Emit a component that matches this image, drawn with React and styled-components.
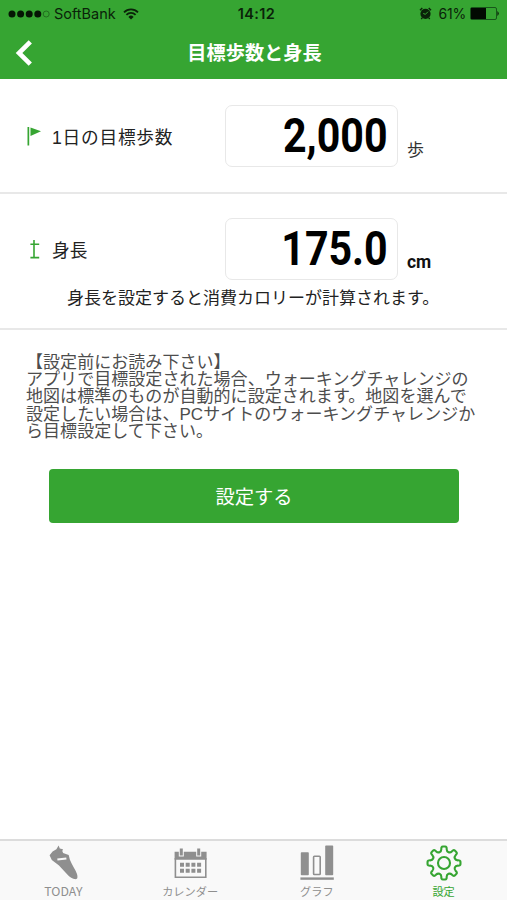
import styled, { createGlobalStyle } from 'styled-components';

const GREEN = '#36a532';
const GRAY = '#8f8f8f';

const GlobalStyle = createGlobalStyle`
  * {
    box-sizing: border-box;
  }
  body {
    margin: 0;
    background: #fff;
    font-family: "Liberation Sans", "Noto Sans CJK JP", sans-serif;
  }
`

const Screen = styled.div`
  display: flex;
  flex-direction: column;
  width: 507px;
  height: 900px;
  overflow: hidden;
  color: #222;
`

const Header = styled.header`
  height: 79px;
  background: ${GREEN};
`

const StatusBar = styled.div`
  display: grid;
  grid-template-columns: 1fr auto 1fr;
  align-items: center;
  height: 27px;
  padding: 0 7px 0 8px;
  font: 400 14.5px/20px Inter, sans-serif;
  color: #0a2209;
`

const StatusGroup = styled.div`
  display: flex;
  align-items: center;
  justify-content: ${({ $end }) => ($end ? 'flex-end' : 'flex-start')};
`

const Carrier = styled.span`
  margin: 0 7px 0 4px;
`

const Clock = styled.span`
  padding-left: 5px;
  font-size: 14.5px;
  font-weight: 600;
  letter-spacing: 0.4px;
`

const Battery = styled.span`
  margin: 0 4px 0 6px;
  font-size: 14px;
  letter-spacing: -0.2px;
`

const NavBar = styled.div`
  display: grid;
  grid-template-columns: 60px 1fr 60px;
  align-items: center;
  height: 52px;
`

const BackButton = styled.button`
  display: flex;
  padding: 0 0 0 15px;
  border: 0;
  background: none;
`

const Title = styled.h1`
  margin: 1px 0 0 2px;
  color: #fff;
  font-size: 19.2px;
  font-weight: 700;
  line-height: 28px;
  text-align: center;
`

const Section = styled.section`
  height: ${({ $height }) => $height}px;
  padding: ${({ $top }) => $top}px 0 0 26px;
  border-bottom: 2px solid #e8e8e8;
`

const Field = styled.div`
  display: grid;
  grid-template-columns: 26px 173px 173px auto;
  align-items: center;
  height: 62px;
`

const Label = styled.label`
  padding-top: 3px;
  font-size: 17.7px;
  line-height: 26px;
  letter-spacing: ${({ $spacing }) => $spacing || 0}px;
`

const ValueBox = styled.div`
  display: flex;
  align-items: center;
  justify-content: flex-end;
  height: 62px;
  padding-right: 9px;
  border: 1px solid #e8e8e8;
  border-radius: 7px;
`

/* narrow, heavy digits */
const Value = styled.span`
  color: #000;
  font: 700 49px/60px Roboto, sans-serif;
  transform: scaleX(0.84);
  transform-origin: right center;
`

const Unit = styled.span`
  align-self: end;
  margin: 0 0 5px 9px;
  font: ${({ $bold }) => ($bold
    ? '700 17.5px/26px Roboto, sans-serif'
    : '400 17px/26px "Noto Sans CJK JP", sans-serif')};
  color: ${({ $bold }) => ($bold ? '#111' : '#333')};
`

const Help = styled.p`
  margin: 6px 0 0 41px;
  font-size: 17px;
  line-height: 26px;
  white-space: nowrap;
`

const Notice = styled.p`
  margin: 24px 0 0 26px;
  color: #4d4d4d;
  font-size: 17px;
  line-height: 17.2px;
  letter-spacing: 0.05px;
  white-space: nowrap;
`

const SubmitButton = styled.button`
  width: 410px;
  height: 54px;
  margin: 29px 0 0 49px;
  border: 0;
  border-radius: 4px;
  background: ${GREEN};
  color: #fff;
  font: 400 19.3px/52px "Noto Sans CJK JP", sans-serif;
`

const TabBar = styled.nav`
  display: grid;
  grid-template-columns: repeat(4, 1fr);
  height: 61px;
  margin-top: auto;
  border-top: 2px solid #dcdcdc;
  background: #f9f9f9;
  font-family: "Noto Sans CJK JP", sans-serif;
`

const Tab = styled.div`
  display: flex;
  flex-direction: column;
  align-items: center;
  padding-top: 4px;
  color: ${({ $active }) => ($active ? GREEN : GRAY)};
  font-size: ${({ $size }) => $size || 11.2}px;
  line-height: 16px;

  svg {
    margin-bottom: 2px;
  }
`

const SignalDots = () => (
  <svg width="42" height="10" viewBox="0 0 42 10">
    {[4, 12.6, 21.2, 29.8].map((x) => (
      <circle key={x} cx={x} cy="5" r="3.5" fill="#051604" />
    ))}
    <circle cx="38.2" cy="5" r="3" fill="none" stroke="#1d611b" strokeWidth="0.8" />
  </svg>
)

const WifiIcon = () => (
  <svg width="16" height="12" viewBox="0 0 16 12" fill="none" stroke="#0a2209" strokeWidth="1.8">
    <path d="M1 4.3a10 10 0 0 1 14 0M3.4 6.8a6.5 6.5 0 0 1 9.2 0" />
    <path d="M8 11.5 5.4 8.9a3.7 3.7 0 0 1 5.2 0z" fill="#0a2209" stroke="none" />
  </svg>
)

const AlarmIcon = () => (
  <svg width="13" height="13" viewBox="0 0 13 13">
    <circle cx="6.5" cy="6.8" r="5.1" fill="#0a2209" />
    <path d="M1 3.2 3.3 1M12 3.2 9.7 1M3.2 10.8l-.9 1.2M9.8 10.8l.9 1.2" stroke="#0a2209" strokeWidth="1.4" />
    <path d="M6.3 7.4 9 4.7M6.5 7.3 4.2 6.5" stroke={GREEN} strokeWidth="1" />
  </svg>
)

const BatteryIcon = () => (
  <svg width="30" height="13" viewBox="0 0 30 13">
    <rect x="0.5" y="0.5" width="26" height="12" rx="1.5" fill="none" stroke="#17561a" />
    <path d="M1 1h15v11H1z" fill="#020a02" />
    <path d="M27.4 4q2.8 2.5 0 5z" fill="#0a2209" />
  </svg>
)

const BackIcon = () => (
  <svg width="18" height="26" viewBox="0 0 18 26" fill="none" stroke="#fff" strokeWidth="4.6">
    <path d="M15.3 1.8 4 13l11.3 11.2" />
  </svg>
)

const FlagIcon = () => (
  <svg width="16" height="20" viewBox="0 0 16 20" fill={GREEN}>
    <path d="M1.5 1h1.7v18.5H1.5zM4.5 1.5 15 5.3 4.5 10z" />
  </svg>
)

const HeightIcon = () => (
  <svg width="16" height="20" viewBox="0 0 16 20" fill="none" stroke={GREEN} strokeWidth="1.6">
    <path d="M8 1v18M4.4 5.2h8.8M4.4 18.6h8.8" />
  </svg>
)

const ShoeIcon = () => (
  <svg width="34" height="36" viewBox="0 0 34 36">
    <path
      d="M12.6 .6 13.8 3.4l3.2.8-.7 1.9.8 2 5.6 2 1.2 4.6c2 5.2 5.6 9.9 7 14 .8 2.3.9 5-.6 5.4-3 .4-6.6-1.9-9.2-4.9L13 20.5 5.8 15 3.6 10.2 6.6 6.4l3.8-2.1z"
      fill={GRAY}
    />
    <path d="m11.4 14.6 9-1.1" stroke="#f9f9f9" strokeWidth="2" />
  </svg>
)

const CalendarIcon = () => (
  <svg width="34" height="36" viewBox="0 0 34 36" fill={GRAY}>
    <path d="M1.6 6.8h4.2v4.8h5V6.8h12.4v4.8h5V6.8h5.4v8H1.6z" />
    <path d="M6.8 3.4h3v7h-3zM24.2 3.4h3v7h-3z" />
    <path d="M2.4 13v19.2h30.4V13" fill="none" stroke={GRAY} strokeWidth="1.6" />
    {[7, 12.7, 18.4, 24.1].map((x) => (
      <path key={x} d={`M${x} 17.8h4v4h-4zM${x} 23.8h4v4h-4z`} />
    ))}
  </svg>
)

const ChartIcon = () => (
  <svg width="34" height="36" viewBox="0 0 34 36" fill={GRAY}>
    <rect x="0.8" y="7.2" width="8" height="23" rx="0.8" />
    <rect x="13.6" y="11.3" width="6.6" height="18.2" rx="0.8" fill="none" stroke={GRAY} strokeWidth="1.6" />
    <rect x="25.2" y="0.6" width="8" height="29.6" rx="0.8" />
    <rect x="0.4" y="32.4" width="33.4" height="2.4" />
  </svg>
)

const gearPoint = (r, deg) => {
  const a = (deg * Math.PI) / 180;
  return `${(18 + r * Math.sin(a)).toFixed(2)} ${(18 - r * Math.cos(a)).toFixed(2)}`;
}

// eight teeth, joined by rounded dents
const gearPath = [0, 45, 90, 135, 180, 225, 270, 315].map((deg, i) => (
  `${i ? 'L' : 'M'}${gearPoint(14, deg - 11)}Q${gearPoint(16.6, deg - 10)} ${gearPoint(16.5, deg - 4)}`
  + `L${gearPoint(16.5, deg + 4)}Q${gearPoint(16.6, deg + 10)} ${gearPoint(14, deg + 11)}`
  + `C${gearPoint(11.2, deg + 14)} ${gearPoint(11.2, deg + 31)} ${gearPoint(14, deg + 34)}`
)).join('') + 'Z';

const GearIcon = () => (
  <svg width="36" height="36" viewBox="0 0 36 36" fill="none" stroke={GREEN} strokeWidth="2.1" strokeLinejoin="round">
    <path d={gearPath} />
    <circle cx="18" cy="18" r="6" />
  </svg>
)

const tabs = [
  { label: 'TODAY', Icon: ShoeIcon, size: 12.3 },
  { label: 'カレンダー', Icon: CalendarIcon },
  { label: 'グラフ', Icon: ChartIcon },
  { label: '設定', Icon: GearIcon, active: true },
];

export default function App() {
  return (
    <>
      <GlobalStyle />
      <Screen>
        <Header>
          <StatusBar>
            <StatusGroup>
              <SignalDots />
              <Carrier>SoftBank</Carrier>
              <WifiIcon />
            </StatusGroup>
            <Clock>14:12</Clock>
            <StatusGroup $end>
              <AlarmIcon />
              <Battery>61%</Battery>
              <BatteryIcon />
            </StatusGroup>
          </StatusBar>
          <NavBar>
            <BackButton><BackIcon /></BackButton>
            <Title>目標歩数と身長</Title>
          </NavBar>
        </Header>

        <Section $height={115} $top={26}>
          <Field>
            <FlagIcon />
            <Label $spacing={0.75}>1日の目標歩数</Label>
            <ValueBox><Value>2,000</Value></ValueBox>
            <Unit>歩</Unit>
          </Field>
        </Section>

        <Section $height={136} $top={24}>
          <Field>
            <HeightIcon />
            <Label>身長</Label>
            <ValueBox><Value>175.0</Value></ValueBox>
            <Unit $bold>cm</Unit>
          </Field>
          <Help>身長を設定すると消費カロリーが計算されます。</Help>
        </Section>

        <Notice>
          【設定前にお読み下さい】<br />
          アプリで目標設定された場合、ウォーキングチャレンジの<br />
          地図は標準のものが自動的に設定されます。地図を選んで<br />
          設定したい場合は、PCサイトのウォーキングチャレンジか<br />
          ら目標設定して下さい。
        </Notice>
        <SubmitButton>設定する</SubmitButton>

        <TabBar>
          {tabs.map(({ label, Icon, size, active }) => (
            <Tab key={label} $size={size} $active={active}>
              <Icon />
              {label}
            </Tab>
          ))}
        </TabBar>
      </Screen>
    </>
  );
}
